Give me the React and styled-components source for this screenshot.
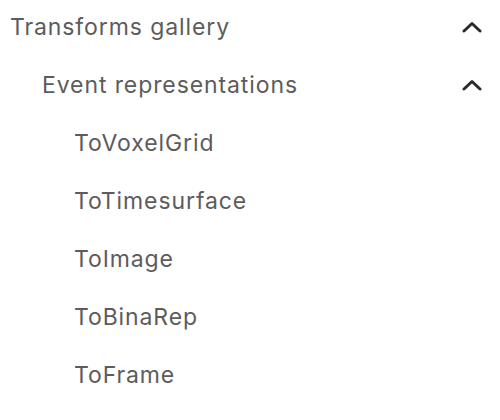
import React from 'react';
import styled, { createGlobalStyle } from 'styled-components';

const GlobalStyle = createGlobalStyle`
  body {
    margin: 0;
    background: #fff;
    font-family: Inter, "Liberation Sans", Arial, sans-serif;
  }
`;

const Nav = styled.nav`
  width: 500px;
`;

const Row = styled.div`
  display: flex;
  align-items: center;
  justify-content: space-between;
  height: 58px;
  padding-left: ${(p) => 10 + p.level * 32}px;
  padding-right: 18px;
  box-sizing: border-box;
  color: #5c5c5c;
  font-size: 23px;
  letter-spacing: 0.9px;
  margin-top: ${(p) => (p.first ? -2 : 0)}px;
`;

const Label = styled.span`
  line-height: 1;
`;

const Chevron = styled.svg`
  width: 20px;
  height: 12px;
  display: block;
`;

const ChevronUp = () => (
  <Chevron viewBox="0 0 20 12">
    <path
      d="M2 10 L10 2.5 L18 10"
      fill="none"
      stroke="#2b2b2b"
      strokeWidth="3"
      strokeLinecap="round"
      strokeLinejoin="round"
    />
  </Chevron>
);

const items = ['ToVoxelGrid', 'ToTimesurface', 'ToImage', 'ToBinaRep', 'ToFrame'];

export default function App() {
  return (
    <>
      <GlobalStyle />
      <Nav>
        <Row level={0} first>
          <Label>Transforms gallery</Label>
          <ChevronUp />
        </Row>
        <Row level={1}>
          <Label>Event representations</Label>
          <ChevronUp />
        </Row>
        {items.map((t) => (
          <Row key={t} level={2}>
            <Label>{t}</Label>
          </Row>
        ))}
      </Nav>
    </>
  );
}
